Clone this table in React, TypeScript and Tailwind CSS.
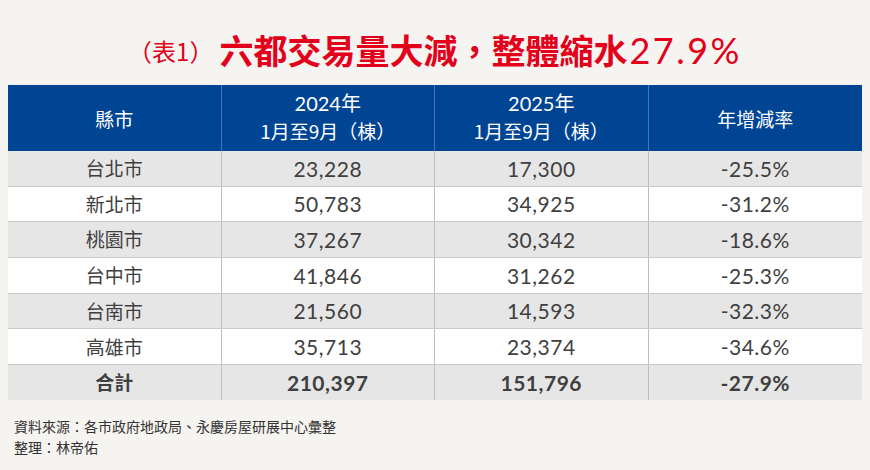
const ROWS = [
  { city: "台北市", y2024: "23,228", y2025: "17,300", rate: "-25.5%" },
  { city: "新北市", y2024: "50,783", y2025: "34,925", rate: "-31.2%" },
  { city: "桃園市", y2024: "37,267", y2025: "30,342", rate: "-18.6%" },
  { city: "台中市", y2024: "41,846", y2025: "31,262", rate: "-25.3%" },
  { city: "台南市", y2024: "21,560", y2025: "14,593", rate: "-32.3%" },
  { city: "高雄市", y2024: "35,713", y2025: "23,374", rate: "-34.6%" },
];

const CJK = "font-['Noto_Sans_CJK_TC',sans-serif]";
const NUM = "font-['Lato','Noto_Sans_CJK_TC',sans-serif]";

export default function App() {
  return (
    <div className={`w-[870px] h-[470px] bg-[#f5f4f0] ${CJK} flex flex-col`}>
      <div className="h-[85px] flex items-center justify-center pt-[14px] text-[#e3001b]">
        <span className="text-[24px] mr-[6px] mt-[3px]">（表1）</span>
        <span className="text-[34px] font-bold">六都交易量大減，整體縮水</span>
        <span className={`text-[36px] ml-[2px] tracking-[2.5px] ${NUM} font-normal`}>27.9%</span>
      </div>

      <div className="mx-[8px] bg-white">
        <div className="grid grid-cols-4 h-[66px] bg-[#004494] text-white text-[19px] leading-[27px]">
          <div className="flex items-center justify-center border-r border-[#4a73b6]">縣市</div>
          <div className="flex flex-col items-center justify-center border-r border-[#4a73b6] pb-[2px]">
            <span className={`${NUM} text-[20px]`}>2024年</span>
            <span>1月至9月（棟）</span>
          </div>
          <div className="flex flex-col items-center justify-center border-r border-[#4a73b6] pb-[2px]">
            <span className={`${NUM} text-[20px]`}>2025年</span>
            <span>1月至9月（棟）</span>
          </div>
          <div className="flex items-center justify-center">年增減率</div>
        </div>

        {ROWS.map((r, i) => (
          <div
            key={r.city}
            className={`grid grid-cols-4 h-[35.7px] border-b border-[#c9c9c9] text-[#3f3f3f] ${
              i % 2 === 0 ? "bg-[#e6e6e6]" : "bg-white"
            }`}
          >
            <div className="flex items-center justify-center border-r border-[#bdbdbd] text-[19px]">{r.city}</div>
            <div className={`flex items-center justify-center border-r border-[#bdbdbd] text-[21px] tracking-[0.5px] ${NUM}`}>{r.y2024}</div>
            <div className={`flex items-center justify-center border-r border-[#bdbdbd] text-[21px] tracking-[0.5px] ${NUM}`}>{r.y2025}</div>
            <div className={`flex items-center justify-center text-[21px] tracking-[0.5px] ${NUM}`}>{r.rate}</div>
          </div>
        ))}

        <div className="grid grid-cols-4 h-[35px] bg-[#e6e6e6] text-[#3f3f3f] font-bold">
          <div className="flex items-center justify-center border-r border-[#bdbdbd] text-[19px]">合計</div>
          <div className={`flex items-center justify-center border-r border-[#bdbdbd] text-[21px] tracking-[0.5px] ${NUM}`}>210,397</div>
          <div className={`flex items-center justify-center border-r border-[#bdbdbd] text-[21px] tracking-[0.5px] ${NUM}`}>151,796</div>
          <div className={`flex items-center justify-center text-[21px] tracking-[0.5px] ${NUM}`}>-27.9%</div>
        </div>
      </div>

      <div className="px-[14px] pt-[16px] text-[14px] leading-[21px] text-[#333]">
        <div>資料來源：各市政府地政局、永慶房屋研展中心彙整</div>
        <div>整理：林帝佑</div>
      </div>
    </div>
  );
}
